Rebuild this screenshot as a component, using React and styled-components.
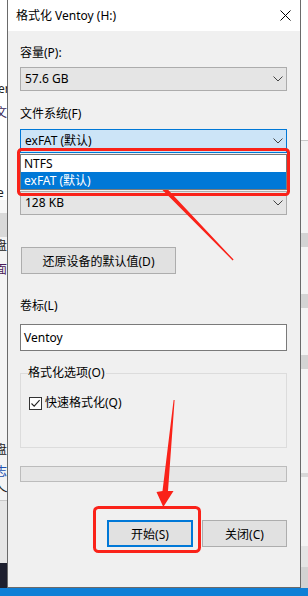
import React from "react";
import styled, { createGlobalStyle } from "styled-components";

const GlobalStyle = createGlobalStyle`
  html, body { margin: 0; padding: 0; }
  body {
    width: 308px;
    height: 596px;
    overflow: hidden;
    background: #f0f0f0;
    font-family: "Noto Sans", "Noto Sans CJK SC", sans-serif;
    font-size: 12px;
    color: #000;
  }
  * { box-sizing: border-box; }
`;

const Desktop = styled.div`
  position: relative;
  width: 308px;
  height: 596px;
  display: flex;
  flex-direction: column;
  overflow: hidden;
`;

const Main = styled.div`
  display: flex;
  height: 588px;
`;

const Taskbar = styled.div`
  height: 8px;
  background: #0f7fd6;
`;

const Strip = styled.div`
  width: 7px;
  display: flex;
  flex-direction: column;
  overflow: hidden;
  background: #f4f4f4;
`;

const StripBand = styled.div`
  height: ${(p) => p.$h}px;
  flex: none;
  background: ${(p) => p.$bg || "transparent"};
  color: ${(p) => p.$color || "#222"};
  font-size: 12px;
  line-height: ${(p) => p.$h}px;
  white-space: nowrap;
  overflow: hidden;
  text-indent: ${(p) => p.$indent || 0}px;
  border-bottom: ${(p) => (p.$line ? "1px solid #c8c8c8" : "none")};
`;

const StripFill = styled.div`
  flex: 1;
  background: ${(p) => p.$bg};
`;

const Window = styled.div`
  width: 294px;
  height: 588px;
  display: flex;
  flex-direction: column;
  border-left: 1px solid #6a6a6a;
  border-right: 1px solid #6a6a6a;
  border-bottom: 1px solid #6a6a6a;
  background: #f0f0f0;
`;

const TitleBar = styled.div`
  height: 31px;
  flex: none;
  background: #fff;
  display: flex;
  align-items: center;
  justify-content: space-between;
  padding: 0 9px 0 8px;
`;

const Title = styled.span`
  font-size: 12px;
  line-height: 16px;
  margin-top: 1px;
`;

const Body = styled.div`
  flex: 1;
  display: flex;
  flex-direction: column;
  padding: 14px 13px 0 12px;
`;

const Label = styled.div`
  line-height: 16px;
  height: 16px;
  margin-top: ${(p) => p.$mt || 0}px;
  visibility: ${(p) => (p.$covered ? "hidden" : "visible")};
`;

const ComboWrap = styled.div`
  position: relative;
  margin-top: ${(p) => p.$mt || 0}px;
`;

const Combo = styled.div`
  height: 24px;
  display: flex;
  align-items: center;
  justify-content: space-between;
  padding: 0 3px 0 4px;
  background: ${(p) => (p.$focused ? "#cce4f7" : "#e5e5e5")};
  border: 1px solid ${(p) => (p.$focused ? "#0078d7" : "#acacac")};
  line-height: 16px;
`;

const DropList = styled.div`
  position: absolute;
  top: calc(100% + 1px);
  left: 0;
  right: 0;
  background: #fff;
  border: 1px solid #7a7a7a;
  z-index: 2;
`;

const Option = styled.div`
  height: 17px;
  line-height: 17px;
  padding-left: 3px;
  background: ${(p) => (p.$selected ? "#0078d7" : "#fff")};
  color: ${(p) => (p.$selected ? "#fff" : "#000")};
`;

const SecondaryButton = styled.div`
  width: 155px;
  height: 27px;
  margin: ${(p) => p.$mt || 0}px 0 0 1px;
  display: flex;
  align-items: center;
  justify-content: center;
  background: #e1e1e1;
  border: 1px solid #adadad;
`;

const TextBox = styled.div`
  height: 27px;
  margin-top: ${(p) => p.$mt || 0}px;
  display: flex;
  align-items: center;
  padding-left: 3px;
  background: #fff;
  border: 1px solid #7a7a7a;
`;

const GroupBox = styled.fieldset`
  margin: ${(p) => p.$mt || 0}px 0 0 0;
  padding: 0 0 36px 8px;
  border: 1px solid #dcdcdc;
  min-width: 0;
`;

const Legend = styled.legend`
  padding: 0 1px 0 0;
  line-height: 16px;
  margin-left: -1px;
`;

const CheckRow = styled.label`
  display: flex;
  align-items: center;
  gap: 3px;
  height: 16px;
  margin-top: 14px;
  line-height: 16px;
`;

const CheckBox = styled.span`
  width: 13px;
  height: 13px;
  flex: none;
  background: #fff;
  border: 1px solid #333;
  display: flex;
  align-items: center;
  justify-content: center;
`;

const Progress = styled.div`
  height: 16px;
  margin-top: ${(p) => p.$mt || 0}px;
  background: #e6e6e6;
  border: 1px solid #bcbcbc;
`;

const ButtonRow = styled.div`
  display: flex;
  justify-content: flex-end;
  gap: 9px;
  margin-top: ${(p) => p.$mt || 0}px;
`;

const DialogButton = styled.div`
  width: ${(p) => p.$w}px;
  height: 27px;
  display: flex;
  align-items: center;
  justify-content: center;
  background: #e1e1e1;
  border: ${(p) => (p.$default ? "2px solid #0078d7" : "1px solid #adadad")};
`;

const Overlay = styled.svg`
  position: absolute;
  left: 0;
  top: 0;
  pointer-events: none;
`;

const Chevron = () => (
  <svg width="10" height="6" viewBox="0 0 10 6">
    <path d="M0.5 0.5 L5 5 L9.5 0.5" fill="none" stroke="#444" strokeWidth="1" />
  </svg>
);

const CloseIcon = () => (
  <svg width="11" height="11" viewBox="0 0 11 11">
    <path d="M0.5 0.5 L10.5 10.5 M10.5 0.5 L0.5 10.5" stroke="#000" strokeWidth="1" />
  </svg>
);

const Check = () => (
  <svg width="11" height="11" viewBox="0 0 11 11">
    <path d="M1.5 5.5 L4.2 8.2 L9.6 2.2" fill="none" stroke="#222" strokeWidth="1.1" />
  </svg>
);

export default function App() {
  const red = "#fa2219";
  return (
    <>
      <GlobalStyle />
      <Desktop>
        <Main>
          <Strip>
            <StripBand $h={82} $bg="#fff" />
            <StripBand $h={14} $bg="#fff" $indent={-2}>er</StripBand>
            <StripBand $h={8} $bg="#fff" />
            <StripBand $h={18} $bg="#fff" $color="#3a2a5a" $indent={-5}>文件</StripBand>
            <StripBand $h={64} $bg="#fff" />
            <StripBand $h={14} $bg="#fff" $indent={-3}>e</StripBand>
            <StripBand $h={13} $bg="#f7f7f7" />
            <StripBand $h={24} $bg="#d9d9d9" />
            <StripBand $h={18} $indent={-5}>盘</StripBand>
            <StripBand $h={6} />
            <StripBand $h={18} $color="#4a1a5a" $indent={-5}>面</StripBand>
            <StripBand $h={24} />
            <StripBand $h={12} $color="#30d0e0" $indent={-9}>·:</StripBand>
            <StripBand $h={126} />
            <StripBand $h={18} $indent={-5}>盘</StripBand>
            <StripBand $h={4} />
            <StripBand $h={18} $color="#2050b0" $indent={-5}>志</StripBand>
            <StripBand $h={14} $indent={-4}>乀</StripBand>
            <StripBand $h={6} $line />
            <StripBand $h={62} $bg="#e6e6e6" />
            <StripFill $bg="#1d1f2e" />
          </Strip>
          <Window>
            <TitleBar>
              <Title>格式化 Ventoy (H:)</Title>
              <CloseIcon />
            </TitleBar>
            <Body>
              <Label>容量(P):</Label>
              <ComboWrap $mt={6}>
                <Combo>
                  57.6 GB
                  <Chevron />
                </Combo>
              </ComboWrap>
              <Label $mt={15}>文件系统(F)</Label>
              <ComboWrap $mt={7}>
                <Combo $focused>
                  exFAT (默认)
                  <Chevron />
                </Combo>
                <DropList>
                  <Option>NTFS</Option>
                  <Option $selected>exFAT (默认)</Option>
                </DropList>
              </ComboWrap>
              <Label $mt={15} $covered>分配单元大小(A)</Label>
              <ComboWrap $mt={7}>
                <Combo>
                  128 KB
                  <Chevron />
                </Combo>
              </ComboWrap>
              <SecondaryButton $mt={32}>还原设备的默认值(D)</SecondaryButton>
              <Label $mt={24}>卷标(L)</Label>
              <TextBox $mt={10}>Ventoy</TextBox>
              <GroupBox $mt={14}>
                <Legend>格式化选项(O)</Legend>
                <CheckRow>
                  <CheckBox>
                    <Check />
                  </CheckBox>
                  快速格式化(Q)
                </CheckRow>
              </GroupBox>
              <Progress $mt={18} />
              <ButtonRow $mt={38}>
                <DialogButton $w={86} $default>开始(S)</DialogButton>
                <DialogButton $w={85}>关闭(C)</DialogButton>
              </ButtonRow>
            </Body>
          </Window>
          <Strip>
            <StripBand $h={141} $bg="#fff" $line />
            <StripBand $h={92} />
            <StripBand $h={14} $bg="#d4d4d4" />
            <StripBand $h={47} />
            <StripBand $h={14} $bg="#d4d4d4" />
            <StripBand $h={47} />
            <StripBand $h={14} $bg="#d4d4d4" />
            <StripBand $h={104} />
            <StripBand $h={4} $bg="#d8d8d8" />
            <StripBand $h={69} $bg="#f4f4f4" />
            <StripBand $h={21} $bg="#e4e4e4" />
            <StripFill $bg="#d2d2d2" />
          </Strip>
        </Main>
        <Taskbar />
        <Overlay width="308" height="596" viewBox="0 0 308 596">
          <rect x="18.5" y="149.5" width="270" height="45" rx="3" fill="none" stroke={red} strokeWidth="3" />
          <rect x="94.5" y="507.5" width="105" height="44" rx="4" fill="none" stroke={red} strokeWidth="3" />
          <polygon
            fill={red}
            points="144,169 161,174 157.5,178.5 233.6,259.6 232.6,260.4 154,181.5 147.5,188"
          />
          <polygon
            fill={red}
            points="163.3,507 173.5,491 168,491 174.6,400 173.6,400 162.5,491 156.5,492"
          />
        </Overlay>
      </Desktop>
    </>
  );
}
